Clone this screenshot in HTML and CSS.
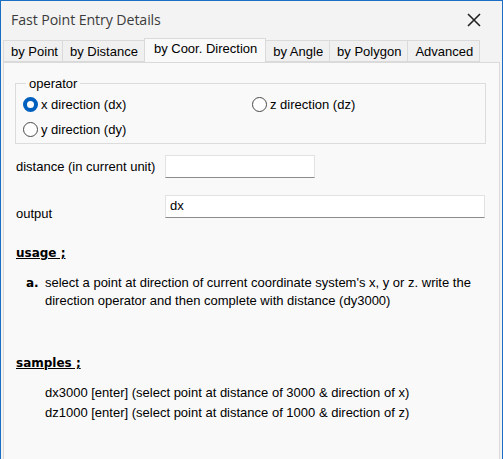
FILE: index.html
```html
<!DOCTYPE html>
<html>
<head>
<meta charset="utf-8">
<title>Fast Point Entry Details</title>
<link rel="stylesheet" href="styles.css">
</head>
<body>
<div class="window">
  <div class="titlebar">
    <span class="title">Fast Point Entry Details</span>
    <span class="close">
      <svg width="14" height="14" viewBox="0 0 14 14"><path d="M1 1 L13 13 M13 1 L1 13" stroke="#222" stroke-width="1.6" fill="none"/></svg>
    </span>
  </div>
  <div class="tabs">
    <div class="tab tab-first">by Point</div>
    <div class="tab">by Distance</div>
    <div class="tab active">by Coor. Direction</div>
    <div class="tab">by Angle</div>
    <div class="tab">by Polygon</div>
    <div class="tab">Advanced</div>
  </div>
  <div class="panel">
    <fieldset class="group">
      <legend>operator</legend>
      <div class="radios">
        <label class="radio"><span class="dot checked"></span>x direction (dx)</label>
        <label class="radio"><span class="dot"></span>z direction (dz)</label>
        <label class="radio"><span class="dot"></span>y direction (dy)</label>
      </div>
    </fieldset>
    <div class="row row-distance">
      <span class="label">distance (in current unit)</span>
      <div class="field short"></div>
    </div>
    <div class="row row-output">
      <span class="label label-low">output</span>
      <div class="field long">dx</div>
    </div>
    <h3 class="heading">usage ;</h3>
    <div class="item">
      <span class="marker">a.</span>
      <p class="item-text">select a point at direction of current coordinate system's x, y or z. write the direction operator and then complete with distance (dy3000)</p>
    </div>
    <h3 class="heading heading-samples">samples ;</h3>
    <div class="samples">
      <p>dx3000 [enter] (select point at distance of 3000 &amp; direction of x)</p>
      <p>dz1000 [enter] (select point at distance of 1000 &amp; direction of z)</p>
    </div>
  </div>
</div>
</body>
</html>
```
FILE: styles.css
```css
* { box-sizing: border-box; }
html, body { margin: 0; padding: 0; }
body {
  font-family: "Liberation Sans", Arial, sans-serif;
  font-size: 13px;
  color: #000;
  background: #f3f3f3;
}
.window {
  width: 503px;
  height: 459px;
  border: 1px solid #1b6ec2;
  border-bottom: none;
  background: #f3f3f3;
  display: flex;
  flex-direction: column;
}
.titlebar {
  height: 37px;
  display: flex;
  align-items: center;
  justify-content: space-between;
  padding: 0 21px 0 10px;
}
.title {
  font-family: "Open Sans", "Noto Sans", sans-serif;
  font-size: 14.2px;
  color: #3c3c3c;
  letter-spacing: -0.1px;
}
.close { display: flex; }
.tabs {
  display: flex;
  align-items: flex-end;
  height: 24px;
  padding-left: 2px;
  position: relative;
  z-index: 1;
}
.tab {
  height: 22px;
  line-height: 21px;
  padding: 0 6px 0 7px;
  border: 1px solid #dadada;
  border-right: none;
  background: #f0f0f0;
  white-space: nowrap;
}
.tab.tab-first { padding: 0 4px 0 7px; }
.tab:nth-child(6) { border-right: 1px solid #dadada; }
.tab.active {
  height: 25px;
  line-height: 20px;
  background: #f9f9f9;
  border-right: 1px solid #dadada;
  margin-right: -1px;
  padding: 0 8px 0 9px;
  margin-bottom: -1px;
}
.panel {
  flex: 1;
  margin: 0 2px 0 2px;
  border: 1px solid #dadada;
  border-bottom: none;
  background: #f9f9f9;
  padding: 13px 13px 0 11px;
}
.group {
  margin: 0;
  height: 68px;
  border: 1px solid #dcdcdc;
  padding: 0 0 0 7px;
}
.group legend {
  padding: 0 3px;
  margin-left: 3px;
  line-height: 15px;
  color: #000;
}
.radios {
  display: grid;
  grid-template-columns: 229px 1fr;
  row-gap: 9px;
  margin-top: 5px;
}
.radio {
  display: flex;
  align-items: center;
  height: 16px;
  gap: 3px;
}
.dot {
  width: 15px;
  height: 15px;
  border-radius: 50%;
  border: 1px solid #4a4a4a;
  background: #fff;
  flex: none;
}
.dot.checked {
  border: 4.5px solid #0060c0;
  background: #fff;
}
.row {
  display: flex;
  align-items: center;
}
.row-distance { margin-top: 11px; }
.row-output { margin-top: 17px; }
.label {
  width: 150px;
  padding-left: 1px;
}
.label-low { position: relative; top: 7px; }
.field {
  height: 23px;
  background: #fff;
  border: 1px solid #e2e2e2;
  border-bottom: 1px solid #8c8c8c;
  padding: 1px 4px;
  line-height: 18px;
}
.field.short { width: 150px; }
.field.long { width: 320px; }
.heading {
  font-family: "DejaVu Sans", Verdana, sans-serif;
  font-size: 12px;
  font-weight: bold;
  text-decoration: underline;
  margin: 28px 0 0 1px;
  line-height: 15px;
}
.heading-samples { margin-top: 46px; }
.item {
  display: flex;
  margin-top: 13px;
  padding-left: 11px;
}
.marker {
  font-family: "DejaVu Sans", Verdana, sans-serif;
  font-size: 12px;
  font-weight: bold;
  width: 19px;
  flex: none;
  line-height: 18px;
}
.item-text {
  margin: 0;
  line-height: 18px;
}
.samples {
  margin-top: 12px;
  padding-left: 30px;
}
.samples p {
  margin: 0;
  line-height: 20px;
}
```
